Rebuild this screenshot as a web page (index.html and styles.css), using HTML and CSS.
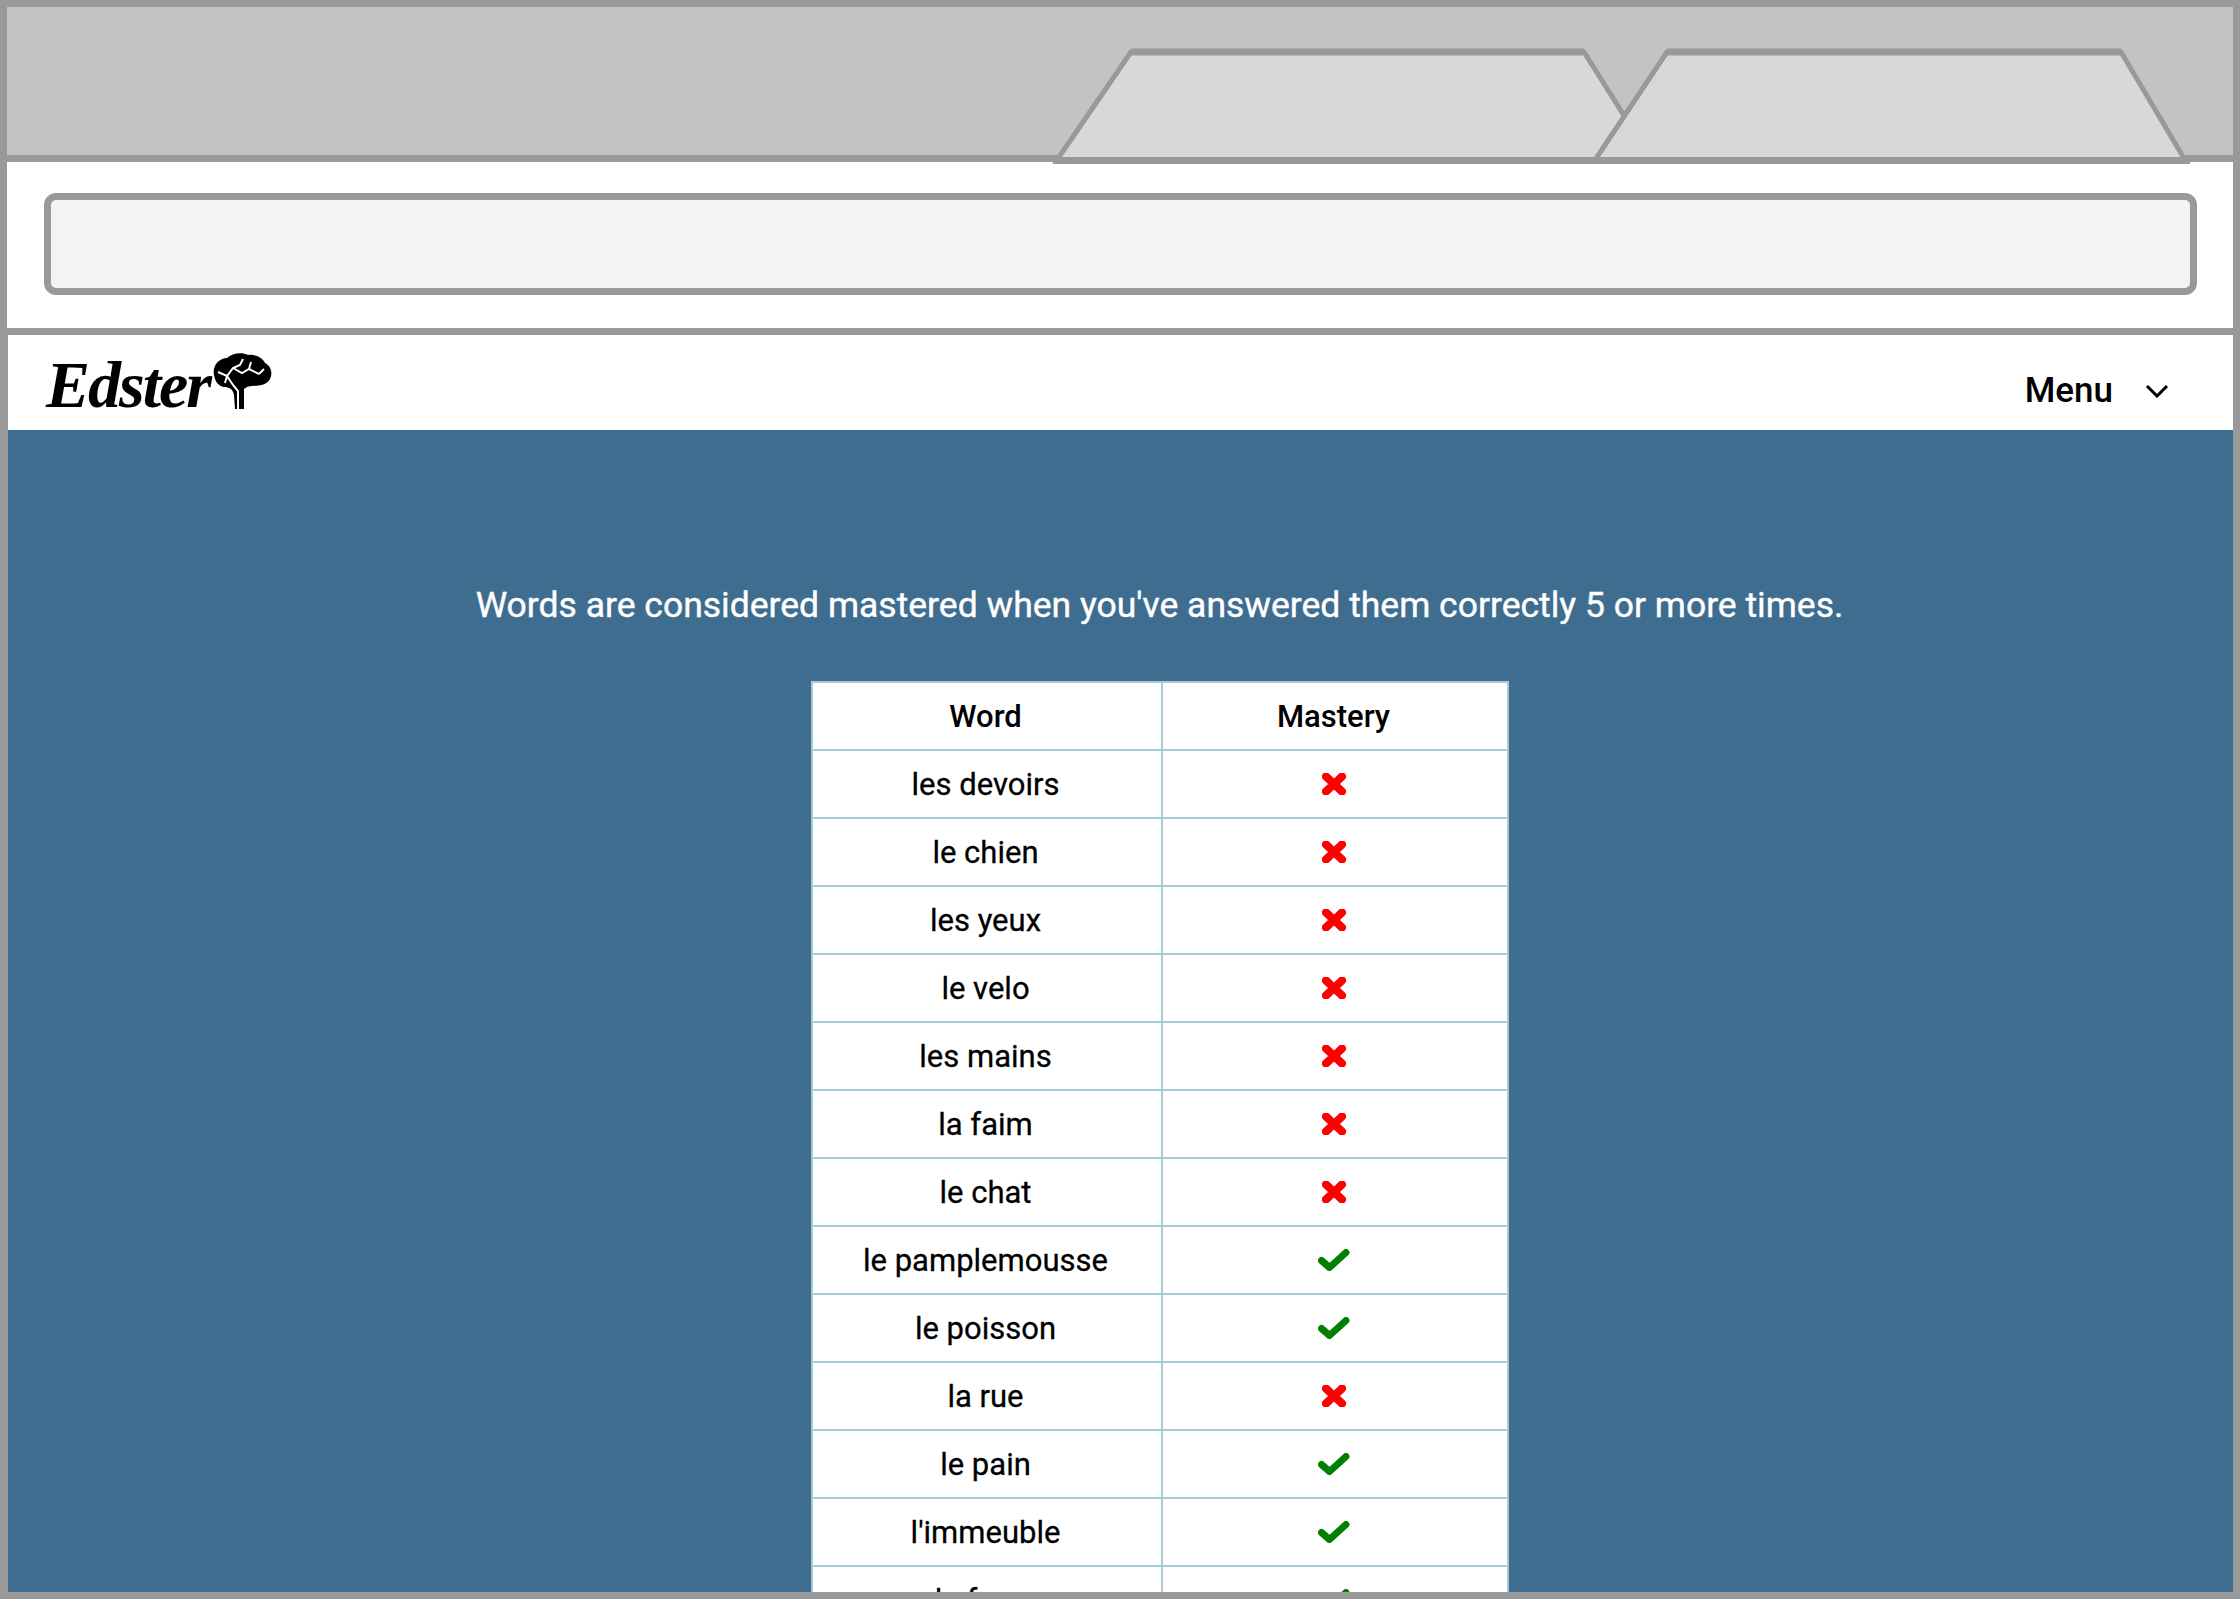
FILE: index.html
```html
<!DOCTYPE html>
<html lang="en">

<head>
    <meta charset="UTF-8" />
    <title>Edster - Mastery</title>
    <link rel="stylesheet" href="styles.css">
</head>

<body>
    <div class="browser">
        <div class="tab-strip">
            <svg class="tabs" width="1140" height="116" viewBox="0 0 1140 116">
                <path class="tab" d="M6 112 L80 4 H533 L601 112 Z" />
                <path class="tab-edge" d="M80 4 H533 M2 112.500 H601" />
                <path class="tab" d="M544 112 L616 4 H1070 L1134 112 Z" />
                <path class="tab-edge" d="M616 4 H1070 M540 112.500 H1139" />
            </svg>
        </div>
        <div class="address-row">
            <div class="address-bar"></div>
        </div>

        <nav class="topnav">
            <a class="logo" href="#">
                <span class="logo-text">Edster</span>
                <svg class="brain" width="60" height="56" viewBox="0 0 60 56">
                    <path d="M2 22 C0 12 8 5 15 5 C20 0 30 -1 36 2 C44 1 51 5 53 10 C59 13 61 20 58 26 C55 32 47 33 40 33 C37 33 34 34 32 36 L32 56 L23 56 L22 42 C21 36 17 34 12 34 C6 33 3 28 2 22 Z" />
                    <path class="vein" d="M6 19 L15 23 L21 15 L28 12 L31 6 M21 15 L30 20 L37 16 L47 21 M37 16 L39 9 M47 21 L52 16 M15 23 L13 30 M15 23 L21 32 L26 38 L26 56" />
                </svg>
            </a>
            <a class="menu-toggle" href="#">
                Menu
                <svg class="chevron" width="24" height="14" viewBox="0 0 24 14">
                    <path d="M2 2 L12 12 L22 2" />
                </svg>
            </a>
        </nav>

        <main class="content">
            <p class="intro">Words are considered mastered when you've answered them correctly 5 or more times.</p>

            <table class="mastery">
                <thead>
                    <tr>
                        <th>Word</th>
                        <th>Mastery</th>
                    </tr>
                </thead>
                <tbody id="listaPalavras"></tbody>
            </table>
        </main>
    </div>

    <script>
        const palavras = [
            ['les devoirs', false],
            ['le chien', false],
            ['les yeux', false],
            ['le velo', false],
            ['les mains', false],
            ['la faim', false],
            ['le chat', false],
            ['le pamplemousse', true],
            ['le poisson', true],
            ['la rue', false],
            ['le pain', true],
            ["l'immeuble", true],
            ['le foyer', true]
        ];

        const iconeCerto = '<svg class="mark" width="32" height="22" viewBox="0 0 32 22"><path class="yes" d="M3.500 11.500 L11.500 18.500 L28 3.500" /></svg>';
        const iconeErrado = '<svg class="mark" width="24" height="22" viewBox="0 0 24 22"><path class="no" d="M4 3.500 L20 18.500 M20 3.500 L4 18.500" /></svg>';

        const corpo = document.getElementById('listaPalavras');
        palavras.forEach(([palavra, certo]) => {
            corpo.innerHTML += `
          <tr>
            <td>${palavra}</td>
            <td>${certo ? iconeCerto : iconeErrado}</td>
          </tr>
        `;
        });
    </script>
</body>

</html>
```

FILE: styles.css
```css
* {
    box-sizing: border-box;
}

html,
body {
    margin: 0;
    height: 100%;
}

body {
    font-family: Roboto, sans-serif;
    background-color: #fff;
}

.browser {
    height: 1599px;
    border: 7px solid #999;
    overflow: hidden;
    display: flex;
    flex-direction: column;
}

.tab-strip {
    position: relative;
    z-index: 1;
    height: 155px;
    flex: none;
    display: flex;
    justify-content: flex-end;
    align-items: flex-end;
    padding-right: 42px;
    background-color: #c3c3c3;
    border-bottom: 7px solid #999;
}

.tabs {
    display: block;
    margin-bottom: -9px;
    flex: none;
}

.tab {
    fill: #d8d8d8;
    stroke: #999;
    stroke-width: 5;
}

.tab-edge {
    fill: none;
    stroke: #999;
    stroke-width: 7;
}

.address-row {
    height: 173px;
    flex: none;
    padding: 31px 36px 33px 37px;
    background-color: #fff;
    border-bottom: 7px solid #999;
}

.address-bar {
    height: 102px;
    background-color: #f3f3f3;
    border: 7px solid #999;
    border-radius: 12px;
}

.topnav {
    height: 95px;
    flex: none;
    display: flex;
    justify-content: space-between;
    align-items: center;
    padding: 0 64px 0 38px;
    background-color: #fff;
    border-left: 1px solid #999;
}

.logo {
    display: flex;
    align-items: flex-start;
    padding-top: 4px;
    color: #000;
    text-decoration: none;
}

.logo-text {
    font-family: "Liberation Serif", serif;
    font-size: 66px;
    font-style: italic;
    font-weight: bold;
    line-height: 72px;
    letter-spacing: -2px;
}

.brain {
    fill: #000;
    margin: 4px 0 0 2px;
}

.vein {
    fill: none;
    stroke: #fff;
    stroke-width: 2;
}

.menu-toggle {
    display: flex;
    align-items: center;
    gap: 32px;
    padding-top: 16px;
    color: #000;
    font-size: 35px;
    font-weight: 500;
    text-decoration: none;
}

.chevron {
    fill: none;
    stroke: #000;
    stroke-width: 3;
}

.content {
    flex: 1;
    min-height: 0;
    padding: 150px 0 0 78px;
    background-color: #3f6d90;
    border-left: 1px solid #999;
}

.intro {
    margin: 0 0 51px;
    color: #fff;
    font-size: 35.500px;
    line-height: 50px;
    text-align: center;
    -webkit-text-stroke: 0.4px #fff;
}

.mastery {
    width: 698px;
    margin: 0 auto;
    table-layout: fixed;
    border-collapse: collapse;
    background-color: #fff;
    font-size: 31px;
    text-align: center;
}

.mastery th,
.mastery td {
    height: 68px;
    padding: 0 2px 0 0;
    border: 2px solid #a8c8dc;
    vertical-align: middle;
}

.mastery th {
    font-weight: 500;
}

.mastery th:first-child {
    width: 350px;
}

.mastery td {
    -webkit-text-stroke: 0.3px #000;
}

.mark {
    display: block;
    margin: 0 auto;
}

.yes,
.no {
    fill: none;
}

.yes {
    stroke: #008000;
    stroke-width: 7;
    stroke-linejoin: round;
    stroke-linecap: round;
}

.no {
    stroke: #f00;
    stroke-width: 8;
    stroke-linecap: round;
}
```
